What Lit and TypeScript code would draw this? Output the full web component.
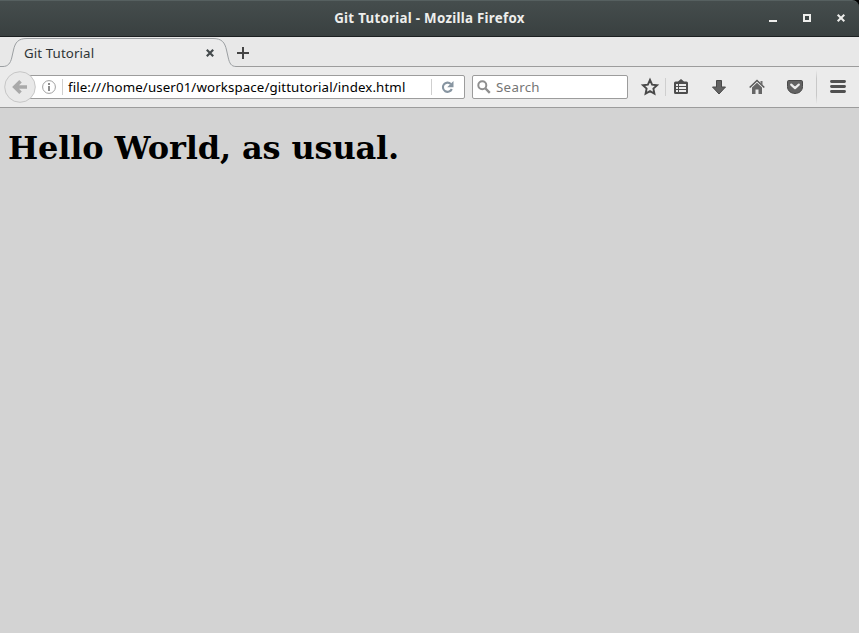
import { LitElement, html, css, svg } from "lit";
import { customElement } from "lit/decorators.js";

@customElement("window-title")
class WindowTitle extends LitElement {
  static styles = css`
    :host { display: block; height: 37px; background: #000; }
    .bar {
      height: 37px; box-sizing: border-box; display: grid;
      grid-template-columns: 1fr auto 1fr; align-items: center;
      background: linear-gradient(#454d4d, #394040);
      border-top: 1px solid #566060; border-bottom: 1px solid #1c2021;
      border-radius: 0 7px 0 0;
    }
    .title {
      grid-column: 2; color: #eeeeec; white-space: nowrap; padding-bottom: 2px;
      font: bold 13.3px/20px "Noto Sans", sans-serif; letter-spacing: 0.29px;
    }
    .buttons { display: flex; justify-content: flex-end; gap: 18px; padding: 0 10px 1px 0; }
    svg { display: block; width: 16px; height: 16px; }
  `;
  render() {
    return html`<div class="bar">
      <div class="title">Git Tutorial - Mozilla Firefox</div>
      <div class="buttons">
        <svg viewBox="0 0 16 16"><path d="M4 10h8v2H4z" fill="#eeeeec"/></svg>
        <svg viewBox="0 0 16 16"><path d="M5 5h6v6H5z" fill="none" stroke="#eeeeec" stroke-width="2"/></svg>
        <svg viewBox="0 0 16 16"><path d="M4.7 4.7l6.6 6.6M11.3 4.7l-6.6 6.6" stroke="#eeeeec" stroke-width="2"/></svg>
      </div>
    </div>`;
  }
}

@customElement("tab-strip")
class TabStrip extends LitElement {
  static styles = css`
    :host { display: block; height: 30px; background: #e8e8e8; }
    .strip { display: flex; height: 30px; }
    .tab { position: relative; width: 236px; height: 30px; }
    .shape { position: absolute; left: 0; top: 0; width: 236px; height: 30px; }
    .label {
      position: relative; display: flex; align-items: center; justify-content: space-between;
      height: 30px; padding: 2px 21px 0 24px; box-sizing: border-box;
      font: 13.3px/20px "Noto Sans", sans-serif; color: #2e3436; letter-spacing: 0.1px;
    }
    .close { width: 10px; height: 10px; }
    .rest { flex: 1; border-bottom: 1px solid #9c9c9c; padding-top: 10px; box-sizing: border-box; }
    .plus { display: block; width: 14px; height: 14px; }
  `;
  render() {
    return html`<div class="strip">
      <div class="tab">
        <svg class="shape" viewBox="0 0 236 30">
          <path d="M0 29.5H3C8 29.5 10.5 26 11.7 21L13.5 13C15.2 5.5 18 1.5 27 1.5H213C222 1.5 224.8 5.5 226.5 13L228.3 21C229.5 26 231 29.5 236 29.5V30H0Z" fill="#ebebeb"/>
          <path d="M0 29.5H3C8 29.5 10.5 26 11.7 21L13.5 13C15.2 5.5 18 1.5 27 1.5H213C222 1.5 224.8 5.5 226.5 13L228.3 21C229.5 26 231 29.5 236 29.5" fill="none" stroke="#9b9fa2"/>
        </svg>
        <div class="label"><span>Git Tutorial</span>
          <svg class="close" viewBox="0 0 10 10"><path d="M1.8 1.8l6.4 6.4M8.2 1.8l-6.4 6.4" stroke="#444a4c" stroke-width="2.2"/></svg>
        </div>
      </div>
      <div class="rest"><svg class="plus" viewBox="0 0 14 14"><path d="M7 0v12M1 6h12" stroke="#444" stroke-width="2"/></svg></div>
    </div>`;
  }
}

const icons = {
  star: svg`<path d="M10 2.9l2.1 4.7 5 .6-3.700 3.400 1 5-4.400-2.500-4.400 2.500 1-5L2.900 8.200l5-.6z" fill="none" stroke="#494949" stroke-width="1.900"/>`,
  list: svg`<path d="M4.500 4.500H7L10 2l3 2.500h2.500Q17 4.500 17 6v9.500q0 1.500-1.500 1.500h-11Q3 17 3 15.500V6q0-1.500 1.500-1.500z" fill="#4d4d4d"/><path d="M5 7h2v2H5zM8 7h7v2H8zM5 10h2v2H5zM8 10h7v2H8zM5 13h2v2H5zM8 13h7v2H8z" fill="#ebebeb"/>`,
  down: svg`<path d="M7.500 3.500h5V10h4L10 17 3.500 10h4z" fill="#626262" stroke="#484848"/>`,
  home: svg`<path d="M2.700 10.500L10 3.500l7.300 7" fill="none" stroke="#585858" stroke-width="1.500"/><path d="M13.500 4h2v4.500l-2-2z" fill="#707070"/><path d="M5 10.400l5-4.700 5 4.700V17h-3.500v-4.500h-3V17H5z" fill="#666"/>`,
  pocket: svg`<path d="M3.700 3.500h12.600q1.200 0 1.200 1.200v4.800c0 9.300-15 9.300-15 0V4.700q0-1.200 1.200-1.200z" fill="#626262" stroke="#494949"/><path d="M6.200 7.600L10 11.100l3.800-3.500" fill="none" stroke="#ebebeb" stroke-width="2.200" stroke-linecap="round" stroke-linejoin="round"/>`,
  menu: svg`<path d="M3.500 4.500h13M3.500 9.500h13M3.500 14.500h13" stroke="#505050" stroke-width="2.900" stroke-linecap="round"/>`,
};

@customElement("nav-toolbar")
class NavToolbar extends LitElement {
  static styles = css`
    :host { display: block; height: 41px; }
    .bar {
      display: flex; align-items: center; height: 41px; box-sizing: border-box;
      background: #ebebeb; border-bottom: 1px solid #9c9c9c;
      font: 13.3px/20px "Noto Sans", sans-serif;
    }
    .back { display: block; width: 32px; height: 32px; margin-left: 4px; position: relative; z-index: 1; }
    .field {
      height: 24px; box-sizing: border-box; background: #fff; border: 1px solid #9c9c9c;
      border-radius: 2px; display: flex; align-items: center;
    }
    .url { width: 441px; margin-left: -12px; padding-left: 17px; color: #000; }
    .info { width: 14px; height: 14px; flex: none; }
    .sep { width: 1px; height: 18px; background: #cfcfcf; }
    .url .sep { height: 16px; }
    .info + .sep { margin: 0 5px 0 6px; }
    .address { flex: 1; white-space: nowrap; letter-spacing: 0.11px; }
    .reload { width: 32px; height: 22px; }
    .search { width: 156px; margin-left: 7px; padding-left: 4px; color: #757575; gap: 5px; letter-spacing: 0.3px; }
    .lens { width: 14px; height: 14px; }
    .icon { width: 20px; height: 20px; flex: none; }
    .first { margin-left: 12px; }
    .near { margin: 0 0 0 5px; }
    .gap { margin-left: 18px; }
    .divider {
      width: 1px; height: 34px; margin: 0 11px;
      background: linear-gradient(transparent, #c8c8c8 25%, #c8c8c8 75%, transparent);
    }
  `;
  icon(name: keyof typeof icons, cls: string) {
    return html`<svg class="icon ${cls}" viewBox="0 0 20 20">${icons[name]}</svg>`;
  }
  render() {
    return html`<div class="bar">
      <svg class="back" viewBox="0 0 32 32">
        <circle cx="16" cy="16" r="15.3" fill="#e9e9e9" stroke="#c6c6c6"/>
        <path d="M16.500 10.200L10.700 16l5.800 5.800M11 16h12" fill="none" stroke="#a9a9a9" stroke-width="3.600"/>
      </svg>
      <div class="field url">
        <svg class="info" viewBox="0 0 14 14"><circle cx="7" cy="7" r="6.400" fill="none" stroke="#a0a0a0"/><path d="M6 3h2v2H6zM6 6h2v5H6z" fill="#8c8c8c"/></svg>
        <div class="sep"></div>
        <div class="address">file:///home/user01/workspace/gittutorial/index.html</div>
        <div class="sep"></div>
        <svg class="reload" viewBox="0 0 32 22"><path d="M18.800 8A4.600 4.600 0 1 0 19.800 13" fill="none" stroke="#8795a1" stroke-width="2.100"/><path d="M21.500 5v6.300h-6.300z" fill="#8795a1"/></svg>
      </div>
      <div class="field search">
        <svg class="lens" viewBox="0 0 14 14"><circle cx="5.300" cy="5.300" r="4" fill="none" stroke="#8f8f8f" stroke-width="2"/><path d="M8.500 8.500l4.300 4.300" stroke="#8f8f8f" stroke-width="2.400"/></svg>
        <span>Search</span>
      </div>
      ${this.icon("star", "first")}
      <div class="sep near"></div>
      ${this.icon("list", "near")}
      ${this.icon("down", "gap")}
      ${this.icon("home", "gap")}
      ${this.icon("pocket", "gap")}
      <div class="divider"></div>
      ${this.icon("menu", "")}
    </div>`;
  }
}

@customElement("app-root")
class AppRoot extends LitElement {
  static styles = css`
    :host { display: flex; flex-direction: column; height: 633px; background: #d3d3d3; overflow: hidden; }
    .page { flex: 1; padding: 21px 8px; }
    .heading { margin: 0; font: bold 32px/38px "DejaVu Serif", serif; color: #000; letter-spacing: -0.14px; }
  `;
  render() {
    return html`<window-title></window-title><tab-strip></tab-strip><nav-toolbar></nav-toolbar>
      <main class="page"><h1 class="heading">Hello World, as usual.</h1></main>`;
  }
}
